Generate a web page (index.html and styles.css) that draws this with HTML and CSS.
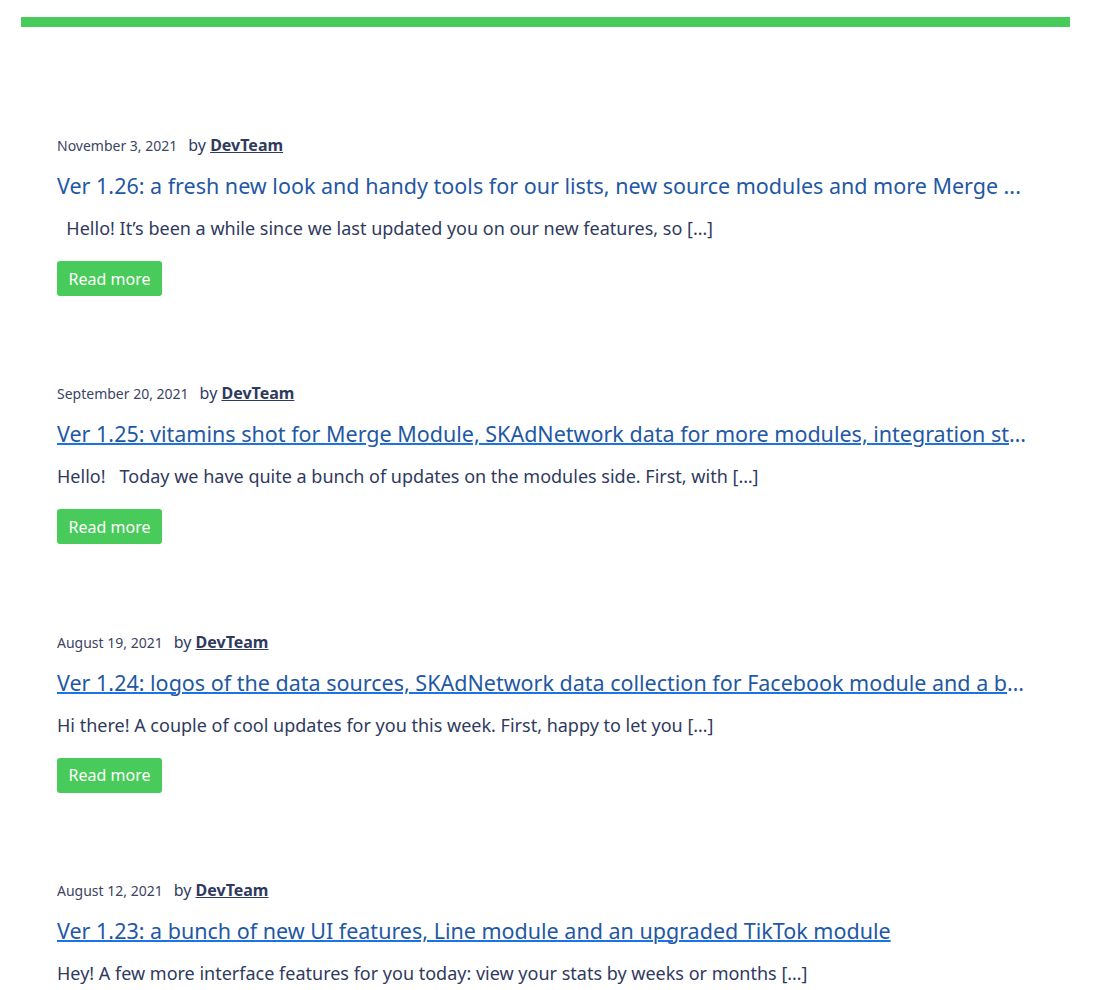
FILE: index.html
```html
<!DOCTYPE html>
<html lang="en">
<head>
<meta charset="utf-8">
<title>Updates</title>
<link rel="stylesheet" href="styles.css">
</head>
<body>
<div class="topbar"></div>
<main class="posts">
  <article class="post">
    <div class="meta"><span class="date">November 3, 2021</span><span class="by">by <a class="author" href="#">DevTeam</a></span></div>
    <h2 class="title"><a class="plain" href="#">Ver 1.26: a fresh new look and handy tools for our lists, new source modules and more Merge ...</a></h2>
    <p class="excerpt">&nbsp; Hello! It’s been a while since we last updated you on our new features, so […]</p>
    <a class="btn" href="#">Read more</a>
  </article>
  <article class="post">
    <div class="meta"><span class="date">September 20, 2021</span><span class="by">by <a class="author" href="#">DevTeam</a></span></div>
    <h2 class="title"><a href="#">Ver 1.25: vitamins shot for Merge Module, SKAdNetwork data for more modules, integration status</a></h2>
    <p class="excerpt">Hello! &nbsp; Today we have quite a bunch of updates on the modules side. First, with […]</p>
    <a class="btn" href="#">Read more</a>
  </article>
  <article class="post">
    <div class="meta"><span class="date">August 19, 2021</span><span class="by">by <a class="author" href="#">DevTeam</a></span></div>
    <h2 class="title"><a href="#">Ver 1.24: logos of the data sources, SKAdNetwork data collection for Facebook module and a bunch of fixes</a></h2>
    <p class="excerpt">Hi there! A couple of cool updates for you this week. First, happy to let you […]</p>
    <a class="btn" href="#">Read more</a>
  </article>
  <article class="post">
    <div class="meta"><span class="date">August 12, 2021</span><span class="by">by <a class="author" href="#">DevTeam</a></span></div>
    <h2 class="title"><a href="#">Ver 1.23: a bunch of new UI features, Line module and an upgraded TikTok module</a></h2>
    <p class="excerpt">Hey! A few more interface features for you today: view your stats by weeks or months […]</p>
    <a class="btn" href="#">Read more</a>
  </article>
</main>
</body>
</html>
```
FILE: styles.css
```css
html, body {
  margin: 0;
  padding: 0;
  background: #ffffff;
}
body {
  font-family: "Noto Sans", "Lato", sans-serif;
  color: #2f3a5e;
}
.topbar {
  margin: 17px 24px 0 21px;
  height: 10px;
  background: #48cb5a;
}
.posts {
  width: 980px;
  padding: 106px 0 0 57px;
}
.post {
  display: flex;
  flex-direction: column;
  align-items: flex-start;
  margin-bottom: 85.3px;
}
.meta {
  display: flex;
  align-items: baseline;
  gap: 11px;
  height: 24px;
  line-height: 24px;
}
.date {
  font-size: 14px;
  color: #3c4463;
}
.by {
  font-size: 16px;
  color: #2f3a5e;
}
.author {
  font-weight: 700;
  color: #2f3a5e;
  text-decoration: underline;
}
.title {
  margin: 13px 0 0;
  width: 980px;
  font-size: 21.5px;
  font-weight: 400;
  line-height: 32px;
  white-space: nowrap;
  overflow: hidden;
  text-overflow: ellipsis;
  color: #1f58a4;
}
.title a {
  color: #1f58a4;
  text-decoration: underline;
  text-decoration-color: #1a73e8;
  text-decoration-thickness: 2px;
  text-underline-offset: 1px;
}
.title a.plain {
  text-decoration: none;
}
.excerpt {
  margin: 12px 0 0;
  font-size: 18px;
  line-height: 28px;
  color: #2f3a5e;
}
.btn {
  margin-top: 19px;
  display: flex;
  align-items: center;
  justify-content: center;
  width: 105px;
  height: 35px;
  box-sizing: border-box;
  border-radius: 3px;
  background: #48cb5a;
  color: #ffffff;
  font-size: 16px;
  text-decoration: none;
}
```
